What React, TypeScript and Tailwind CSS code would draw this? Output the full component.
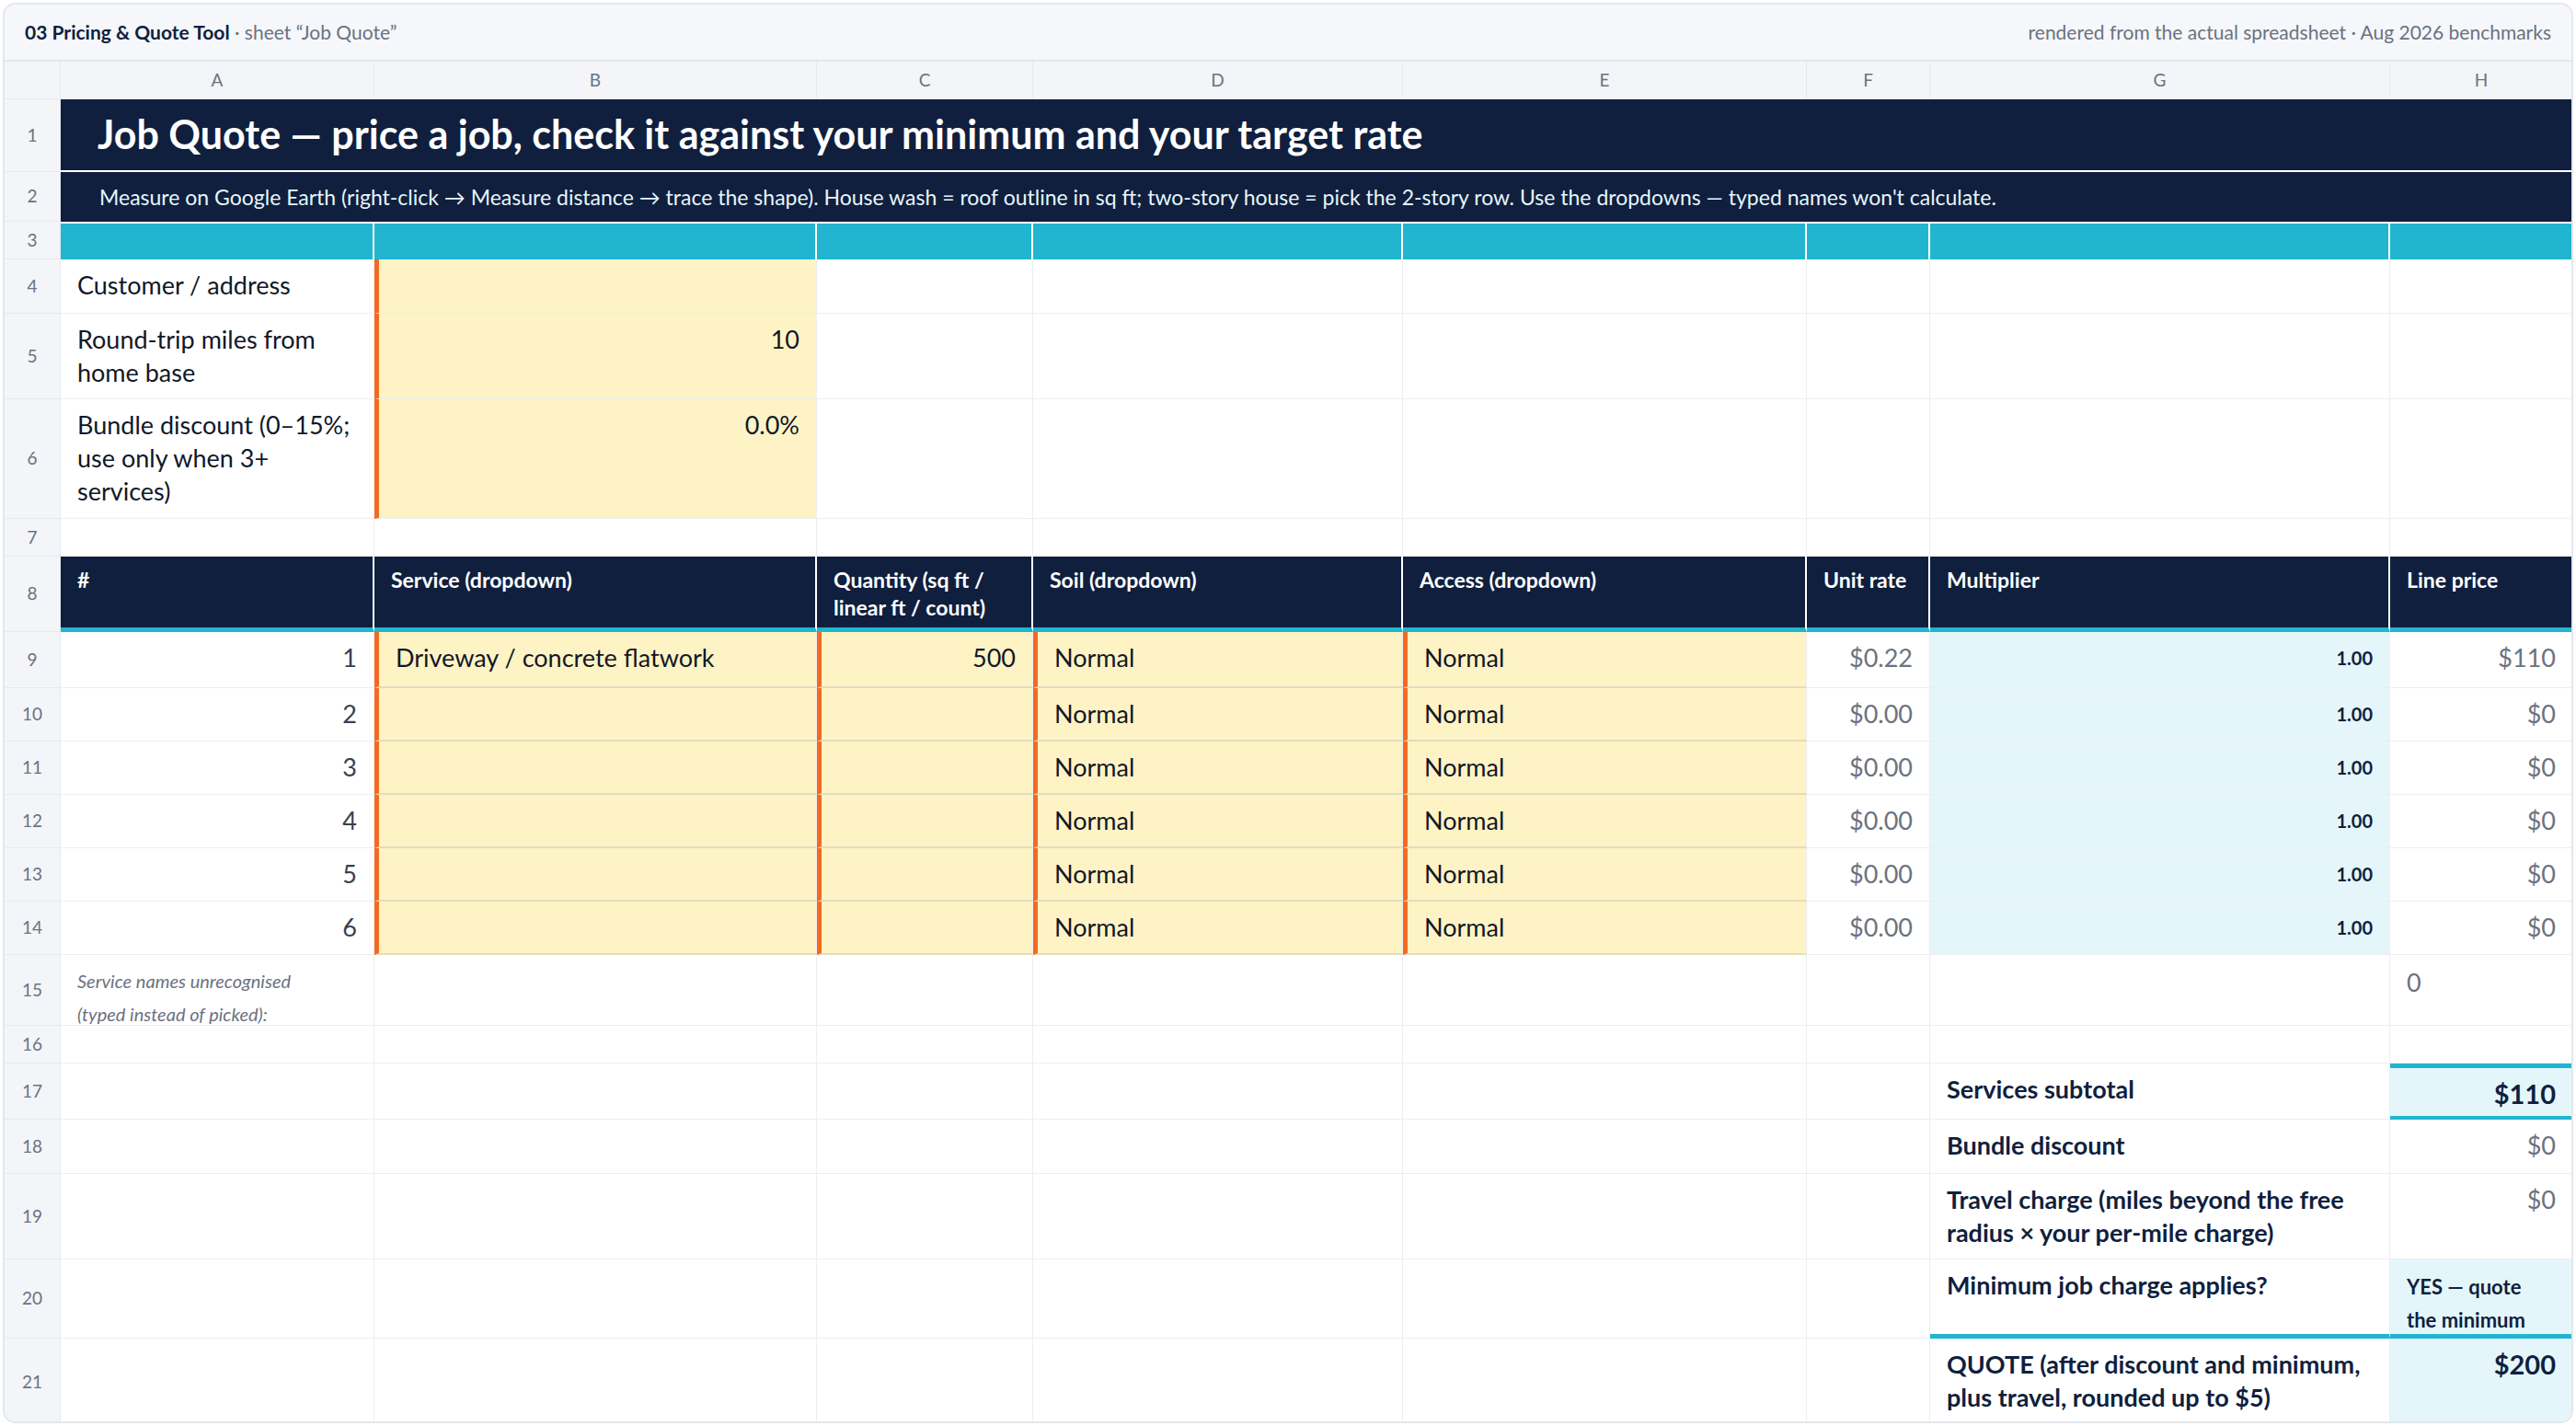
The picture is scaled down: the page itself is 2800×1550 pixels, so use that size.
import React from "react";

const NAVY = "bg-[#101f3e]";
const cellBase = "border-r border-b border-[#eceef1] px-[18px] pt-[10px] leading-[36px] overflow-hidden";

function C({ className = "", children }: { className?: string; children?: React.ReactNode }) {
  const hasColor = /\btext-\[#/.test(className);
  const hasSize = /\btext-\[\d/.test(className);
  return <div className={`${cellBase} ${hasSize ? "" : "text-[27px]"} ${hasColor ? "" : "text-[#111827]"} ${className}`}>{children}</div>;
}
function RN({ n }: { n: number }) {
  return <div className="bg-[#f3f5f8] border-r border-b border-[#e6e9ee] flex items-center justify-center text-[19px] text-[#6b7280]">{n}</div>;
}
const Y = "bg-[#fef3c4]";
const OL = "border-l-[5px] border-l-[#f26b21]";
const LB = "bg-[#e4f6fa]";

export default function App() {
  const cols = ["A", "B", "C", "D", "E", "F", "G", "H"];
  const lines = [
    { n: 1, s: "Driveway / concrete flatwork", q: "500", r: "$0.22", p: "$110" },
    { n: 2, s: "", q: "", r: "$0.00", p: "$0" },
    { n: 3, s: "", q: "", r: "$0.00", p: "$0" },
    { n: 4, s: "", q: "", r: "$0.00", p: "$0" },
    { n: 5, s: "", q: "", r: "$0.00", p: "$0" },
    { n: 6, s: "", q: "", r: "$0.00", p: "$0" },
  ];
  const empty = (k: number) => Array.from({ length: k }, (_, i) => <C key={i} />);
  return (
    <div className="w-[2800px] h-[1550px] bg-white p-[3px]" style={{ fontFamily: "Lato, 'Open Sans', sans-serif" }}>
      <div className="w-full h-full rounded-[14px] border-2 border-[#e3e7ec] overflow-hidden bg-white flex flex-col">
        <div className="h-[62px] shrink-0 bg-[#f5f7fa] border-b-2 border-[#e3e7ec] flex items-center justify-between px-[22px] text-[21px]">
          <div><span className="font-bold text-[#101f3e]">03 Pricing &amp; Quote Tool</span><span className="text-[#6b7280]"> · sheet “Job Quote”</span></div>
          <div className="text-[#6b7280]">rendered from the actual spreadsheet · Aug 2026 benchmarks</div>
        </div>
        <div className="grid grid-cols-[61px_341px_481px_235px_402px_439px_134px_500px_199px] grid-rows-[41px_79px_54px_41px_59px_93px_130px_41px_82px_61px_58px_58px_58px_58px_58px_77px_41px_61px_59px_93px_86px_95px]">
          <div className="bg-[#f3f5f8] border-r border-b border-[#e6e9ee]" />
          {cols.map((c) => (
            <div key={c} className="bg-[#f3f5f8] border-r border-b border-[#e6e9ee] flex items-center justify-center text-[19px] text-[#6b7280]">{c}</div>
          ))}
          <RN n={1} />
          <div className={`col-span-8 ${NAVY} border-b-2 border-white flex items-center px-[40px] text-[43px] font-bold text-white`}>Job Quote — price a job, check it against your minimum and your target rate</div>
          <RN n={2} />
          <div className={`col-span-8 ${NAVY} flex items-center px-[42px] text-[23px] text-[#e6f6fb]`}>Measure on Google Earth (right-click → Measure distance → trace the shape). House wash = roof outline in sq ft; two-story house = pick the 2-story row. Use the dropdowns — typed names won't calculate.</div>
          <RN n={3} />
          {cols.map((c) => <div key={c} className="bg-[#22b5d0] border-r-2 border-t-2 border-white" />)}
          <RN n={4} />
          <C>Customer / address</C>
          <C className={`${Y} ${OL}`} />
          {empty(6)}
          <RN n={5} />
          <C>Round-trip miles from home base</C>
          <C className={`${Y} ${OL} text-right`}>10</C>
          {empty(6)}
          <RN n={6} />
          <C>Bundle discount (0–15%; use only when 3+ services)</C>
          <C className={`${Y} ${OL} text-right`}>0.0%</C>
          {empty(6)}
          <RN n={7} />
          {empty(8)}
          <RN n={8} />
          {["#", "Service (dropdown)", "Quantity (sq ft / linear ft / count)", "Soil (dropdown)", "Access (dropdown)", "Unit rate", "Multiplier", "Line price"].map((h) => (
            <div key={h} className={`${NAVY} border-r-2 border-white border-b-[5px] border-b-[#22b5d0] px-[18px] pt-[10px] text-[23px] leading-[30px] font-bold text-white`}>{h}</div>
          ))}
          {lines.map((l) => (
            <React.Fragment key={l.n}>
              <RN n={l.n + 8} />
              <C className="text-right text-[#374151]">{l.n}</C>
              <C className={`${Y} ${OL} border-b-[#e2dcc0] border-b-2`}>{l.s}</C>
              <C className={`${Y} ${OL} border-b-[#e2dcc0] border-b-2 text-right`}>{l.q}</C>
              <C className={`${Y} ${OL} border-b-[#e2dcc0] border-b-2`}>Normal</C>
              <C className={`${Y} ${OL} border-b-[#e2dcc0] border-b-2`}>Normal</C>
              <C className="text-right text-[#6b7280]">{l.r}</C>
              <C className={`${LB} border-[#e4f6fa] text-right text-[20px] font-bold text-[#101f3e] pt-[6px]`}>1.00</C>
              <C className="text-right text-[#6b7280]">{l.p}</C>
            </React.Fragment>
          ))}
          <RN n={15} />
          <C className="italic text-[20px] leading-[28px] text-[#6b7280] pt-[8px] px-[16px]">Service names unrecognised<br />(typed instead of picked):</C>
          {empty(6)}
          <C className="text-[#6b7280] pt-[12px]">0</C>
          <RN n={16} />
          {empty(8)}
          <RN n={17} />
          {empty(6)}
          <C className="font-bold text-[#101f3e]">Services subtotal</C>
          <C className={`${LB} border-t-[5px] border-t-[#22b5d0] border-b-[4px] border-b-[#22b5d0] text-right font-bold text-[29px] text-[#101f3e] pt-[6px]`}>$110</C>
          <RN n={18} />
          {empty(6)}
          <C className="font-bold text-[#101f3e]">Bundle discount</C>
          <C className="text-right text-[#6b7280]">$0</C>
          <RN n={19} />
          {empty(6)}
          <C className="font-bold text-[#101f3e]">Travel charge (miles beyond the free radius × your per-mile charge)</C>
          <C className="text-right text-[#6b7280]">$0</C>
          <RN n={20} />
          {empty(6)}
          <C className="font-bold text-[#101f3e] border-b-[5px] border-b-[#22b5d0]">Minimum job charge applies?</C>
          <C className={`${LB} border-b-[5px] border-b-[#22b5d0] font-bold text-[22px] leading-[29px] text-[#101f3e] pt-[12px]`}>YES — quote the minimum</C>
          <RN n={21} />
          {empty(6)}
          <C className="font-bold text-[#101f3e] pt-[8px]">QUOTE (after discount and minimum, plus travel, rounded up to $5)</C>
          <C className={`${LB} border-b-[4px] border-b-[#22b5d0] text-right font-bold text-[29px] text-[#101f3e] pt-[6px]`}>$200</C>
        </div>
      </div>
    </div>
  );
}
